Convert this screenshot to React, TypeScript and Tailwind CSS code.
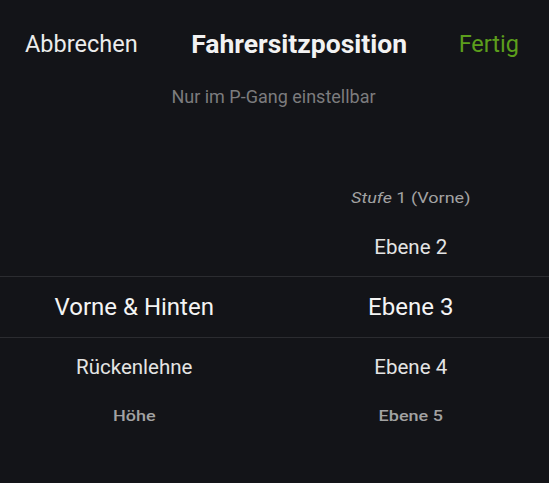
const rows = [
  { left: "", right: "1 (Vorne)", prefix: "Stufe", kind: "far", weight: "font-normal", h: "h-[50px]" },
  { left: "", right: "Ebene 2", kind: "near", h: "h-[54px] pb-[4px]" },
  { left: "Vorne & Hinten", right: "Ebene 3", kind: "selected", h: "h-[62px]" },
  { left: "Rückenlehne", right: "Ebene 4", kind: "near", h: "h-[58px]" },
  { left: "Höhe", right: "Ebene 5", kind: "far", weight: "font-medium", h: "h-[38px]" },
];

const textClass = (kind: string) => {
  if (kind === "selected") return "text-[24px] text-[#f4f4f4]";
  if (kind === "near") return "text-[20.5px] text-[#e4e4e4]";
  return "text-[18px] text-[#a2a2a2] scale-y-[0.8]";
};

export default function App() {
  return (
    <main
      className="w-[549px] h-[483px] bg-[#131418] overflow-hidden flex flex-col"
      style={{ fontFamily: "Roboto, 'Noto Sans', sans-serif" }}
    >
      <header className="flex items-center justify-between pl-[25px] pr-[30px] pt-[28px] h-[60px]">
        <span className="text-[23.5px] text-[#ececec] leading-[32px]">Abbrechen</span>
        <h1 className="text-[26.5px] font-bold text-[#f2f2f2] leading-[32px] pl-[2px]">
          Fahrersitzposition
        </h1>
        <span className="text-[23.5px] text-[#5c9e1c] leading-[32px]">Fertig</span>
      </header>
      <p className="text-center text-[18px] text-[#7c7c7e] leading-[20px] mt-[27px] pr-[2px]">
        Nur im P-Gang einstellbar
      </p>
      <section className="flex flex-col mt-[65px]">
        {rows.map((row, index) => (
          <div
            key={index}
            className={`grid grid-cols-2 items-center ${row.h} ${
              row.kind === "selected" ? "border-y border-[#2b2c30]" : ""
            }`}
          >
            <span className={`text-center pr-[6px] ${textClass(row.kind)} ${row.weight ?? ""}`}>
              {row.left}
            </span>
            <span className={`text-center pr-[2px] ${textClass(row.kind)} ${row.weight ?? ""}`}>
              {row.prefix && <em className="italic">{row.prefix} </em>}
              {row.right}
            </span>
          </div>
        ))}
      </section>
    </main>
  );
}
